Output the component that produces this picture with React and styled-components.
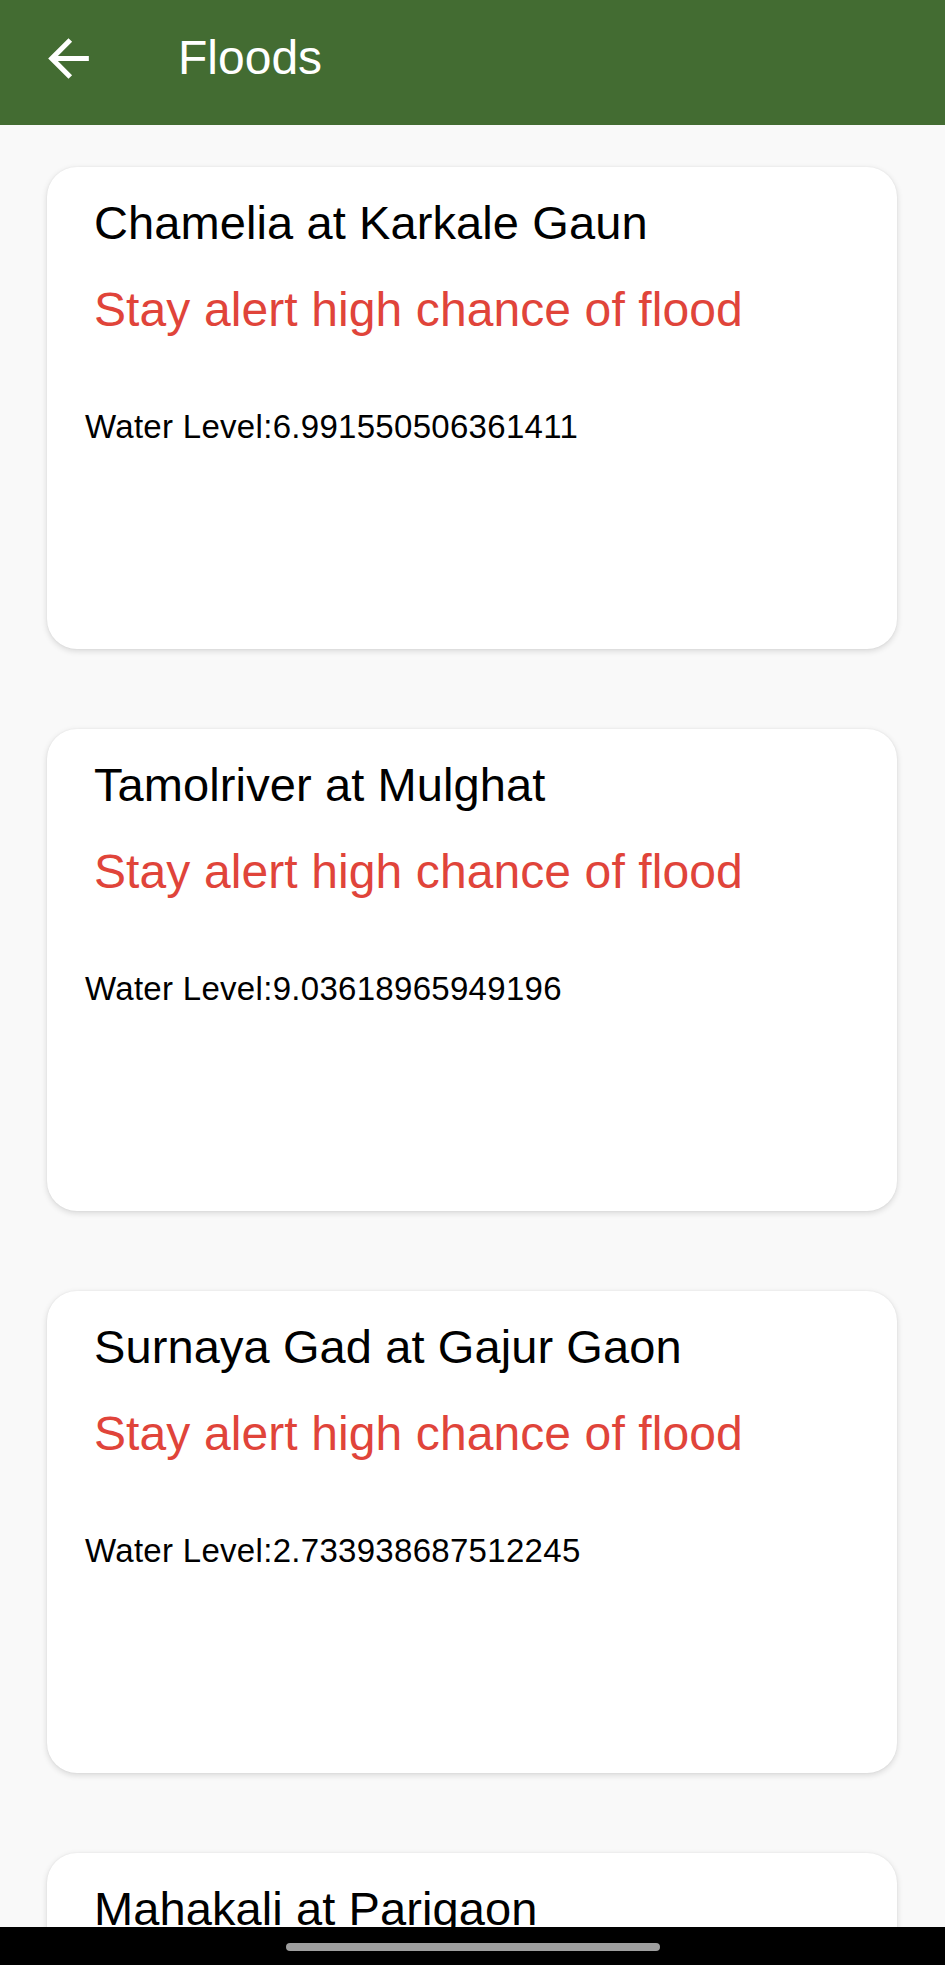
import React from 'react'
import styled, { createGlobalStyle } from 'styled-components'

const GlobalStyle = createGlobalStyle`
  html, body {
    margin: 0;
    padding: 0;
    background: #f9f9f9;
    font-family: "Liberation Sans", Arial, sans-serif;
  }
`

const Screen = styled.div`
  width: 945px;
  height: 1965px;
  overflow: hidden;
  display: flex;
  flex-direction: column;
  background: #f9f9f9;
`

const AppBar = styled.header`
  height: 125px;
  flex-shrink: 0;
  box-sizing: border-box;
  padding: 0 0 9px 38px;
  display: flex;
  align-items: center;
  background: #436c32;
  color: #fff;
`

const BackButton = styled.button`
  width: 61px;
  height: 61px;
  padding: 0;
  border: 0;
  background: none;
  color: #fff;
  display: flex;
  svg { display: block; }
`

const Title = styled.h1`
  margin: 0 0 0 79px;
  font-size: 48px;
  font-weight: 400;
  line-height: 56px;
`

const List = styled.main`
  flex: 1;
  overflow: hidden;
  padding: 42px 48px 0 47px;
  display: flex;
  flex-direction: column;
  gap: 80px;
`

const Card = styled.section`
  flex-shrink: 0;
  height: 482px;
  box-sizing: border-box;
  padding: 28px 40px 0 47px;
  background: #fff;
  border-radius: 30px;
  box-shadow: 0 2px 6px rgba(0, 0, 0, 0.14), 0 0 2px rgba(0, 0, 0, 0.06);
`

const Station = styled.h2`
  margin: 0;
  font-size: 47px;
  font-weight: 400;
  line-height: 56px;
  color: #000;
  letter-spacing: 0.1px;
`

const Alert = styled.p`
  margin: 31px 0 0;
  font-size: 48px;
  line-height: 56px;
  color: #e0443a;
  letter-spacing: 0.1px;
`

const Level = styled.p`
  margin: 69px 0 0 -9px;
  font-size: 33px;
  line-height: 40px;
  color: #000;
  letter-spacing: 0.3px;
`

const NavBar = styled.div`
  height: 38px;
  flex-shrink: 0;
  background: #000;
  display: flex;
  justify-content: center;
  padding-top: 16px;
  box-sizing: border-box;
`

const Handle = styled.div`
  width: 374px;
  height: 8px;
  border-radius: 4px;
  background: #9e9e9e;
`

const floods = [
  { name: 'Chamelia at Karkale Gaun', level: '6.991550506361411' },
  { name: 'Tamolriver at Mulghat', level: '9.03618965949196' },
  { name: 'Surnaya Gad at Gajur Gaon', level: '2.733938687512245' },
  { name: 'Mahakali at Parigaon', level: '5.120394871203948' },
]

const App = () => (
  <Screen>
    <GlobalStyle />
    <AppBar>
      <BackButton aria-label="Back">
        <svg width="61" height="61" viewBox="0 0 24 24" fill="currentColor">
          <path d="M20 11H7.83l5.59-5.59L12 4l-8 8 8 8 1.41-1.41L7.83 13H20v-2z" />
        </svg>
      </BackButton>
      <Title>Floods</Title>
    </AppBar>
    <List>
      {floods.map(f => (
        <Card key={f.name}>
          <Station>{f.name}</Station>
          <Alert>Stay alert high chance of flood</Alert>
          <Level>Water Level:{f.level}</Level>
        </Card>
      ))}
    </List>
    <NavBar>
      <Handle />
    </NavBar>
  </Screen>
)

export default App
